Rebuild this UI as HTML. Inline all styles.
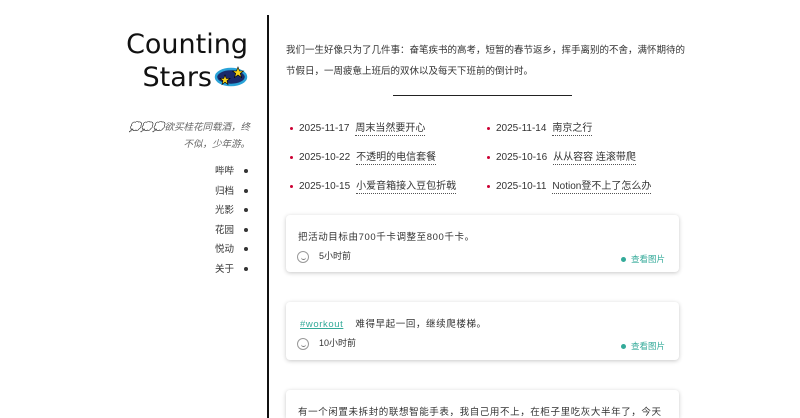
<!DOCTYPE html>
<html><head><meta charset="utf-8"><style>
*{margin:0;padding:0;box-sizing:border-box}
html,body{width:800px;height:418px;overflow:hidden}
body{background:#fff;font-family:"Liberation Sans","Noto Sans CJK SC",sans-serif;color:#222;position:relative}
.vl{position:absolute;left:267px;top:15px;width:2px;height:403px;background:#111}
.title{position:absolute;right:552px;top:28px;text-align:right;font-size:27px;line-height:33px;color:#111;font-family:"DejaVu Sans","Liberation Sans",sans-serif;font-weight:400}
.motto{position:absolute;left:120px;width:130px;top:119px;text-align:right;font-size:9.5px;line-height:17px;color:#666;font-style:italic}
.nav{position:absolute;right:552px;top:162px;text-align:right;font-size:9.5px;line-height:19.5px;color:#333}
.nav span{display:inline-block;width:4px;height:4px;border-radius:50%;background:#333;margin-left:10px;vertical-align:middle}
.intro{position:absolute;left:286px;top:40px;width:400px;font-size:9.5px;line-height:21px;color:#333}
.hr{position:absolute;left:393px;top:95px;width:179px;height:1px;background:#222}
.posts{position:absolute;left:290px;top:116px;width:400px;font-size:10px}
.p{position:absolute;white-space:nowrap;color:#333}
.p i{display:inline-block;width:3px;height:3px;background:#c03;border-radius:50%;vertical-align:middle;margin-right:6px}
.p u{text-decoration:none;border-bottom:1px dotted #555;margin-left:6px;padding-bottom:1px}
.card{position:absolute;left:286px;width:393px;background:#fff;border-radius:4px;box-shadow:0 1px 4px rgba(0,0,0,.22);font-size:9.5px;color:#333}
.card .t{position:absolute;left:12px;top:14px;letter-spacing:.6px;white-space:nowrap}
.card .m{position:absolute;left:11px;top:34px;font-size:9px}
.card .m b{display:inline-block;width:12px;height:12px;border:1px solid #999;border-radius:50%;vertical-align:middle;margin-right:10px;position:relative}
.card .m b:after{content:"";position:absolute;left:2.5px;top:5px;width:5px;height:2px;border-bottom:1px solid #777;border-radius:0 0 3px 3px}
.card .v{position:absolute;right:14px;top:38px;font-size:8.5px;color:#3a9}
.card .v:before{content:"";display:inline-block;width:5px;height:5px;border-radius:50%;background:#3a9;margin-right:5px;vertical-align:middle}
</style></head><body>
<div class="vl"></div>
<div class="title">Counting<br>Stars<svg width="34" height="24" viewBox="0 0 34 24" style="vertical-align:-3px;margin-left:2px"><ellipse cx="17" cy="12" rx="15" ry="8" fill="#1a2a6a" stroke="#2aa3d8" stroke-width="2.5"/><polygon points="24,2 25.5,6 29.5,6 26.3,8.5 27.5,12.5 24,10 20.5,12.5 21.7,8.5 18.5,6 22.5,6" fill="#f6d21a" stroke="#000" stroke-width=".6"/><polygon points="11,10 12.3,13.5 16,13.5 13,15.8 14,19.5 11,17.2 8,19.5 9,15.8 6,13.5 9.7,13.5" fill="#f6d21a" stroke="#000" stroke-width=".6"/></svg></div>
<div class="motto">💭💭💭欲买桂花同载酒，终不似，少年游。</div>
<div class="nav">哔哔<span></span><br>归档<span></span><br>光影<span></span><br>花园<span></span><br>悦动<span></span><br>关于<span></span></div>
<div class="intro">我们一生好像只为了几件事：奋笔疾书的高考，短暂的春节返乡，挥手离别的不舍，满怀期待的节假日，一周疲惫上班后的双休以及每天下班前的倒计时。</div>
<div class="hr"></div>
<div class="posts">
<div class="p" style="left:0;top:3px"><i></i>2025-11-17<u>周末当然要开心</u></div>
<div class="p" style="left:197px;top:3px"><i></i>2025-11-14<u>南京之行</u></div>
<div class="p" style="left:0;top:32px"><i></i>2025-10-22<u>不透明的电信套餐</u></div>
<div class="p" style="left:197px;top:32px"><i></i>2025-10-16<u>从从容容 连滚带爬</u></div>
<div class="p" style="left:0;top:61px"><i></i>2025-10-15<u>小爱音箱接入豆包折戟</u></div>
<div class="p" style="left:197px;top:61px"><i></i>2025-10-11<u>Notion登不上了怎么办</u></div>
</div>
<div class="card" style="top:215px;height:57px"><div class="t">把活动目标由700千卡调整至800千卡。</div><div class="m"><b></b>5小时前</div><div class="v">查看图片</div></div>
<div class="card" style="top:302px;height:58px"><div class="t"><span style="color:#3a9;text-decoration:underline;margin-right:12px;margin-left:2px">#workout</span>难得早起一回，继续爬楼梯。</div><div class="m"><b></b>10小时前</div><div class="v">查看图片</div></div>
<div class="card" style="top:390px;height:28px;border-radius:4px 4px 0 0"><div class="t">有一个闲置未拆封的联想智能手表，我自己用不上，在柜子里吃灰大半年了，今天</div></div>
</body></html>
